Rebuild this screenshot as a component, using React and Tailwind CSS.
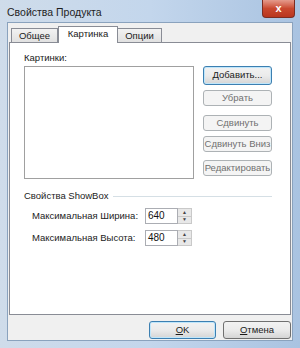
import React from 'react'

const Btn = ({ children, disabled, primary, className = '' }) => (
  <div
    className={`flex items-center justify-center whitespace-nowrap rounded-[3px] border text-[9.5px] ${
      primary ? 'border-[#3c7fb1] shadow-[inset_0_0_0_1px_#bfe6fb]' : disabled ? 'border-[#adb2b5]' : 'border-[#707070]'
    } ${disabled ? 'text-[#707070] bg-[#f4f4f4]' : 'text-[#1a1a1a] bg-gradient-to-b from-[#f2f2f2] via-[#ebebeb] to-[#d5d5d5]'} ${className}`}
  >
    {children}
  </div>
)

const Spin = ({ value }) => (
  <div className="flex h-[16px]">
    <div className="w-[33px] h-full border border-[#abadb3] bg-white text-[10px] leading-[14px] pl-[2px] text-[#111]">{value}</div>
    <div className="w-[14px] h-full flex flex-col bg-[#e8e8e8] border border-l-0 border-[#c9c9c9]">
      <div className="flex-1 flex items-center justify-center text-[5px] leading-none text-[#444] border-b border-[#c9c9c9]">▲</div>
      <div className="flex-1 flex items-center justify-center text-[5px] leading-none text-[#444]">▼</div>
    </div>
  </div>
)

export default function App() {
  return (
    <div
      className="w-[300px] h-[348px] flex flex-col bg-gradient-to-r from-[#cfdcea] via-[#c3d6ec] to-[#a9c3e1] text-[#1a1a1a]"
      style={{ fontFamily: '"Liberation Sans", Arial, sans-serif' }}
    >
      <div className="h-[22px] flex items-start justify-between pl-[7px] pr-[5px]">
        <div className="pt-[5px] text-[10.5px] text-[#1e1e1e]">Свойства Продукта</div>
        <div className="w-[33px] h-[18px] rounded-b-[4px] bg-gradient-to-b from-[#e49a8c] via-[#c9482f] to-[#b9361f] border border-[#7c2d22] border-t-0 flex items-center justify-center text-white text-[11px] font-bold leading-none">
          x
        </div>
      </div>

      <div className="flex-1 mx-[7px] mb-[7px] bg-[#f0f0f0] border border-[#8aa2bd] flex flex-col">
        <div className="h-[18px] flex items-end pl-[3px] mt-[1px]">
          <div className="h-[14px] w-[47px] border border-b-0 border-[#898c95] bg-gradient-to-b from-[#f2f2f2] to-[#e1e1e1] text-[9.5px] leading-[13px] text-center">
            Общее
          </div>
          <div className="h-[17px] w-[60px] -mb-px border border-b-0 border-[#898c95] bg-white text-[9.5px] leading-[14px] text-center relative z-10">
            Картинка
          </div>
          <div className="h-[14px] w-[44px] border border-b-0 border-l-0 border-[#898c95] bg-gradient-to-b from-[#f2f2f2] to-[#e1e1e1] text-[9.5px] leading-[13px] text-center">
            Опции
          </div>
        </div>

        <div className="h-[273px] mx-[1px] bg-white border border-[#898c95] flex flex-col pl-[14px] pr-[18px]">
          <div className="mt-[8px] text-[9.5px] leading-[14px]">Картинки:</div>
          <div className="flex mt-[1px] gap-[9px]">
            <div className="w-[171px] h-[113px] border border-[#a0a0a0] bg-white" />
            <div className="flex flex-col gap-[5px]">
              <Btn primary className="w-[69px] h-[19px]">Добавить...</Btn>
              <Btn disabled className="w-[69px] h-[16px]">Убрать</Btn>
              <Btn disabled className="w-[69px] h-[16px] mt-[4px]">Сдвинуть</Btn>
              <Btn disabled className="w-[69px] h-[16px]">Сдвинуть Вниз</Btn>
              <Btn disabled className="w-[69px] h-[16px] mt-[3px]">Редактировать</Btn>
            </div>
          </div>

          <div className="flex items-center mt-[10px] gap-[4px]">
            <span className="text-[9.5px] leading-[14px] text-[#222]">Свойства ShowBox</span>
            <div className="flex-1 h-px bg-[#d5dfe5]" />
          </div>

          <div className="flex flex-col gap-[6px] mt-[5px] pl-[8px]">
            <div className="flex items-center">
              <span className="w-[113px] whitespace-nowrap text-[9.5px] text-[#222]">Максимальная Ширина:</span>
              <Spin value="640" />
            </div>
            <div className="flex items-center">
              <span className="w-[113px] whitespace-nowrap text-[9.5px] text-[#222]">Максимальная Высота:</span>
              <Spin value="480" />
            </div>
          </div>
        </div>

        <div className="flex justify-end gap-[7px] pr-[1px] mt-[6px]">
          <Btn primary className="w-[67px] h-[18px]">
            <span className="underline">O</span>K
          </Btn>
          <Btn className="w-[68px] h-[18px]">
            <span className="underline">О</span>тмена
          </Btn>
        </div>
      </div>
    </div>
  )
}
